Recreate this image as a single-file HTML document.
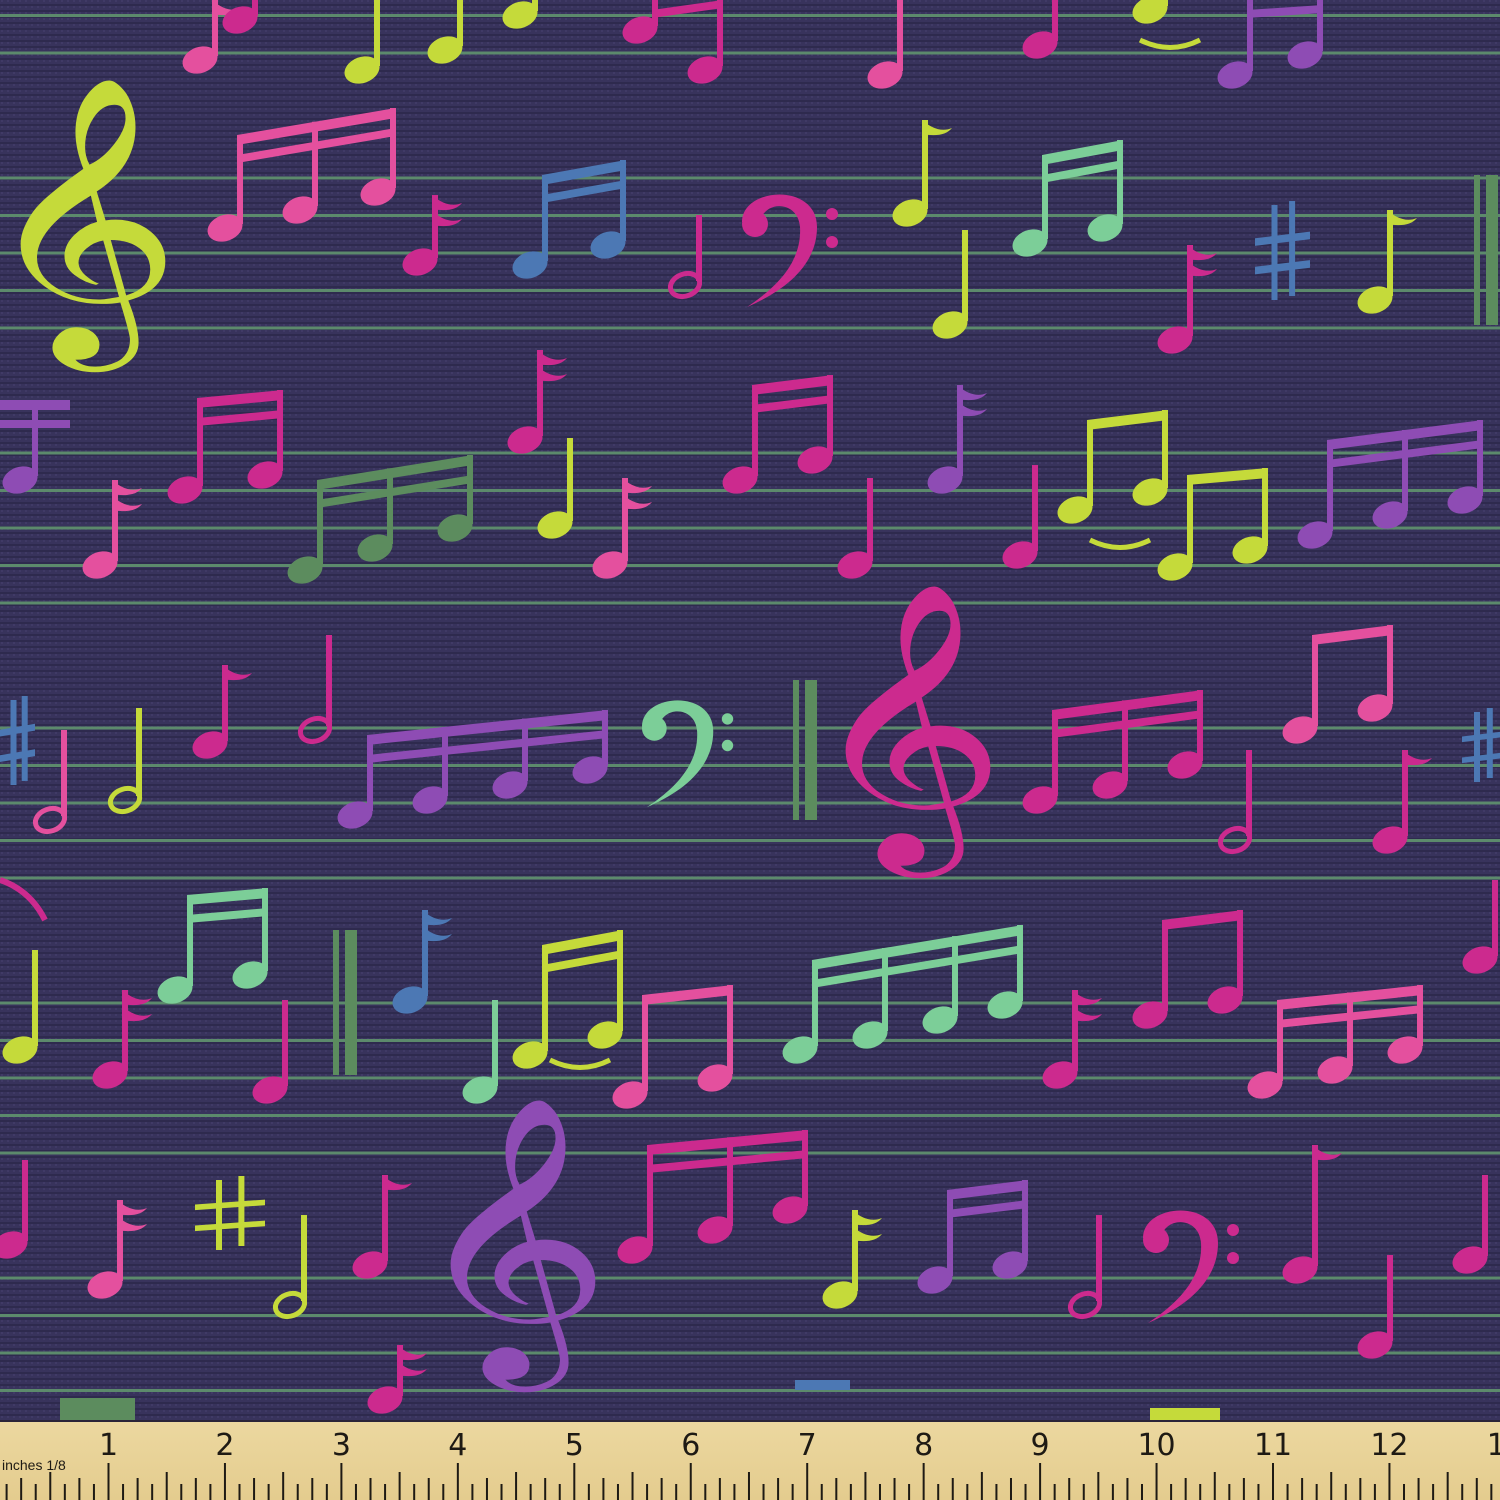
<!DOCTYPE html>
<html><head><meta charset="utf-8"><style>
html,body{margin:0;padding:0;width:1500px;height:1500px;overflow:hidden;background:#37325a}
svg{display:block}
</style></head><body>
<svg id="s" width="1500" height="1500" xmlns="http://www.w3.org/2000/svg">
<defs>
<pattern id="wv" width="6" height="6" patternUnits="userSpaceOnUse">
<rect width="6" height="6" fill="#38335c"/><rect x="0" y="4" width="6" height="2" fill="#2e2a4e"/><rect x="1" y="0" width="2" height="2" fill="#403a66"/>
</pattern>
<linearGradient id="rg" x1="0" y1="0" x2="0" y2="1"><stop offset="0" stop-color="#ecd8a0"/><stop offset="1" stop-color="#e4cc8e"/></linearGradient>
</defs>
<rect width="1500" height="1420" fill="url(#wv)"/>
<g id="lines"></g>
<g id="notes"></g>
<g id="ruler"></g>
</svg>
<script>
var NS="http://www.w3.org/2000/svg",L=document.getElementById('lines'),N=document.getElementById('notes'),R=document.getElementById('ruler');
function el(p,t,a,txt){var e=document.createElementNS(NS,t);for(var k in a)e.setAttribute(k,a[k]);if(txt)e.textContent=txt;p.appendChild(e);return e;}
var staffs=[-97,178,453,728,1003,1278];
staffs.forEach(function(s){for(var i=0;i<5;i++){var y=s+i*37.5;if(y>0&&y<1420)el(L,'rect',{x:0,y:y-1.5,width:1500,height:3,fill:'#5c8a6c'});}});
var C={lime:'#c5da3a',pink:'#e4509e',mag:'#cc2a8e',blue:'#4c78b4',mint:'#7cce98',green:'#5c8c5e',pur:'#8e4cb4'};
function head(x,y,c,hollow){
 if(hollow){el(N,'ellipse',{cx:x,cy:y,rx:15,ry:11,fill:'none',stroke:c,'stroke-width':5,transform:'rotate(-20 '+x+' '+y+')'});}
 else el(N,'ellipse',{cx:x,cy:y,rx:18,ry:13,fill:c,transform:'rotate(-20 '+x+' '+y+')'});
}
function stem(x,y1,y2,c){el(N,'rect',{x:x-3,y:y2,width:6,height:y1-y2,fill:c});}
function q(x,y,c,top){head(x,y,c);stem(x+15,y-4,top,c);}
function h(x,y,c,top){head(x,y,c,1);stem(x+14,y-4,top,c);}
function e8(x,y,c,top,dbl){head(x,y,c);stem(x+15,y-4,top,c);
 var sx=x+15;el(N,'path',{d:'M'+(sx-3)+' '+top+' q16 14 30 8 q-8 10 -30 6 z',fill:c});
 if(dbl)el(N,'path',{d:'M'+(sx-3)+' '+(top+16)+' q16 14 30 8 q-8 10 -30 6 z',fill:c});}
function beam(hs,c,b1,b2,dbl){var x1=hs[0][0]+15,x2=hs[hs.length-1][0]+15;
 hs.forEach(function(p){head(p[0],p[1],c);var t=b1+(b2-b1)*((p[0]+15-x1)/(x2-x1||1));stem(p[0]+15,p[1]-4,t,c);});
 el(N,'polygon',{points:(x1-3)+','+b1+' '+(x2+3)+','+b2+' '+(x2+3)+','+(b2+10)+' '+(x1-3)+','+(b1+10),fill:c});
 if(dbl)el(N,'polygon',{points:(x1-3)+','+(b1+20)+' '+(x2+3)+','+(b2+20)+' '+(x2+3)+','+(b2+28)+' '+(x1-3)+','+(b1+28),fill:c});}
function sharp(x,y,w,hh,c){el(N,'rect',{x:x+w*0.3,y:y,width:6,height:hh,fill:c});el(N,'rect',{x:x+w*0.62,y:y-4,width:6,height:hh,fill:c});
 el(N,'polygon',{points:x+','+(y+hh*0.35)+' '+(x+w)+','+(y+hh*0.28)+' '+(x+w)+','+(y+hh*0.36)+' '+x+','+(y+hh*0.43),fill:c});
 el(N,'polygon',{points:x+','+(y+hh*0.65)+' '+(x+w)+','+(y+hh*0.58)+' '+(x+w)+','+(y+hh*0.66)+' '+x+','+(y+hh*0.73),fill:c});}
function dbar(x,y1,y2,c){el(N,'rect',{x:x,y:y1,width:6,height:y2-y1,fill:c});el(N,'rect',{x:x+12,y:y1,width:12,height:y2-y1,fill:c});}
function bass(x,y,s,c){
 el(N,'path',{d:'M'+x+' '+(y+30*s)+' C'+x+' '+(y-5*s)+' '+(x+75*s)+' '+(y-10*s)+' '+(x+75*s)+' '+(y+35*s)+' C'+(x+75*s)+' '+(y+75*s)+' '+(x+40*s)+' '+(y+100*s)+' '+(x+5*s)+' '+(y+115*s)+' C'+(x+35*s)+' '+(y+95*s)+' '+(x+60*s)+' '+(y+70*s)+' '+(x+58*s)+' '+(y+35*s)+' C'+(x+56*s)+' '+(y+8*s)+' '+(x+22*s)+' '+(y+8*s)+' '+(x+18*s)+' '+(y+30*s)+' z',fill:c});
 el(N,'circle',{cx:x+13*s,cy:y+32*s,r:13*s,fill:c});
 el(N,'circle',{cx:x+90*s,cy:y+22*s,r:6*s,fill:c});el(N,'circle',{cx:x+90*s,cy:y+50*s,r:6*s,fill:c});}
function treble(left,top,c){var b=top+219;
 el(N,'text',{x:0,y:0,'font-size':245,fill:c,'font-family':'DejaVu Sans, sans-serif',transform:'translate('+(left-29*1.4)+' '+b+') scale(1.4 1)'},'\uD834\uDD1E');}

// top partial row
e8(200,60,C.pink,0);q(240,20,C.mag,-10);
beam([[362,70],[445,50]],C.lime,-10,-15);q(520,15,C.lime,-10);
beam([[640,30],[705,70]],C.mag,-10,-20,1);q(885,75,C.pink,-10);q(1040,45,C.mag,-10);
q(1150,10,C.lime,-10);beam([[1235,75],[1305,55]],C.pur,-10,-15,1);
el(N,'path',{d:'M1140 40 q30 15 60 0',stroke:C.lime,'stroke-width':5,fill:'none'});
// staff 1
treble(20,82,C.lime);
beam([[225,228],[300,210],[378,192]],C.pink,135,108,1);
e8(420,262,C.mag,195,1);
beam([[530,265],[608,245]],C.blue,175,160,1);
h(685,285,C.mag,215);
bass(742,192,1,C.mag);
e8(910,213,C.lime,120);q(950,325,C.lime,230);
beam([[1030,243],[1105,228]],C.mint,155,140,1);
e8(1175,340,C.mag,245,1);
sharp(1255,205,55,95,C.blue);
e8(1375,300,C.lime,210);
dbar(1474,175,325,C.green);
// staff 2
beam([[20,480]],C.pur,410,410,1);el(N,'rect',{x:0,y:400,width:70,height:10,fill:C.pur});el(N,'rect',{x:0,y:420,width:70,height:8,fill:C.pur});
beam([[185,490],[265,475]],C.mag,398,390,1);
e8(100,565,C.pink,480,1);
beam([[305,570],[375,548],[455,528]],C.green,480,455,1);
e8(525,440,C.mag,350,1);q(555,525,C.lime,438);e8(610,565,C.pink,478,1);
beam([[740,480],[815,460]],C.mag,385,375,1);
e8(945,480,C.pur,385,1);q(855,565,C.mag,478);q(1020,555,C.mag,465);
beam([[1075,510],[1150,492]],C.lime,420,410);
beam([[1175,567],[1250,550]],C.lime,475,468);
el(N,'path',{d:'M1090 540 q30 15 60 0',stroke:C.lime,'stroke-width':5,fill:'none'});
beam([[1315,535],[1390,515],[1465,500]],C.pur,440,420,1);
// staff 3
sharp(0,700,35,85,C.blue);
h(50,820,C.pink,730);h(125,800,C.lime,708);
e8(210,745,C.mag,665);h(315,730,C.mag,635);
beam([[355,815],[430,800],[510,785],[590,770]],C.pur,735,710,1);
bass(642,698,0.95,C.mint);
dbar(793,680,820,C.green);
treble(845,588,C.mag);
beam([[1040,800],[1110,785],[1185,765]],C.mag,710,690,1);
h(1235,840,C.mag,750);
beam([[1300,730],[1375,708]],C.pink,635,625);
e8(1390,840,C.mag,750);
sharp(1462,712,40,70,C.blue);
// staff 4
beam([[175,990],[250,975]],C.mint,895,888,1);
q(20,1050,C.lime,950);e8(110,1075,C.mag,990,1);q(270,1090,C.mag,1000);
el(N,'path',{d:'M0 880 q30 10 45 40',stroke:C.mag,'stroke-width':6,fill:'none'});
dbar(333,930,1075,C.green);
e8(410,1000,C.blue,910,1);q(480,1090,C.mint,1000);
beam([[530,1055],[605,1035]],C.lime,945,930,1);
el(N,'path',{d:'M550 1060 q30 15 60 0',stroke:C.lime,'stroke-width':5,fill:'none'});
beam([[630,1095],[715,1078]],C.pink,995,985);
beam([[800,1050],[870,1035],[940,1020],[1005,1005]],C.mint,960,925,1);
e8(1060,1075,C.mag,990,1);
beam([[1150,1015],[1225,1000]],C.mag,920,910);
beam([[1265,1085],[1335,1070],[1405,1050]],C.pink,1000,985,1);
q(1480,960,C.mag,880);
// staff 5
q(10,1245,C.mag,1160);e8(105,1285,C.pink,1200,1);
sharp(195,1180,70,70,C.lime);
h(290,1305,C.lime,1215);e8(370,1265,C.mag,1175);
treble(450,1102,C.pur);
beam([[635,1250],[715,1230],[790,1210]],C.mag,1145,1130,1);
e8(840,1295,C.lime,1210,1);
beam([[935,1280],[1010,1265]],C.pur,1190,1180,1);
bass(1143,1208,1,C.mag);
h(1085,1305,C.mag,1215);
e8(1300,1270,C.mag,1145);q(1375,1345,C.mag,1255);q(1470,1260,C.mag,1175);
e8(385,1400,C.mag,1345,1);
el(N,'rect',{x:795,y:1380,width:55,height:10,fill:C.blue});
el(N,'rect',{x:60,y:1398,width:75,height:22,fill:C.green});
el(N,'rect',{x:1150,y:1408,width:70,height:12,fill:C.lime});

// ruler
el(R,'rect',{x:0,y:1420,width:1500,height:80,fill:'url(#rg)'});
el(R,'rect',{x:0,y:1420,width:1500,height:2,fill:'#2a2438'});
var inch=116.45,x0=108.5;
for(var i=-8;i<=110;i++){var x=x0+i*inch/8;if(x<0||x>1500)continue;var m=((i%8)+8)%8;
 var hgt=m==0?37:(m==4?28:(m%2==0?22:16));
 el(R,'rect',{x:x-1,y:1500-hgt,width:2,height:hgt,fill:'#1e1a14'});}
for(var n=1;n<=13;n++){el(R,'text',{x:x0+(n-1)*inch,y:1455,'font-size':30,'text-anchor':'middle',fill:'#1e1a14','font-family':'DejaVu Sans, sans-serif'},String(n));}
el(R,'text',{x:2,y:1470,'font-size':14,fill:'#1e1a14','font-family':'Liberation Sans, sans-serif'},'inches 1/8');
</script>
</body></html>
